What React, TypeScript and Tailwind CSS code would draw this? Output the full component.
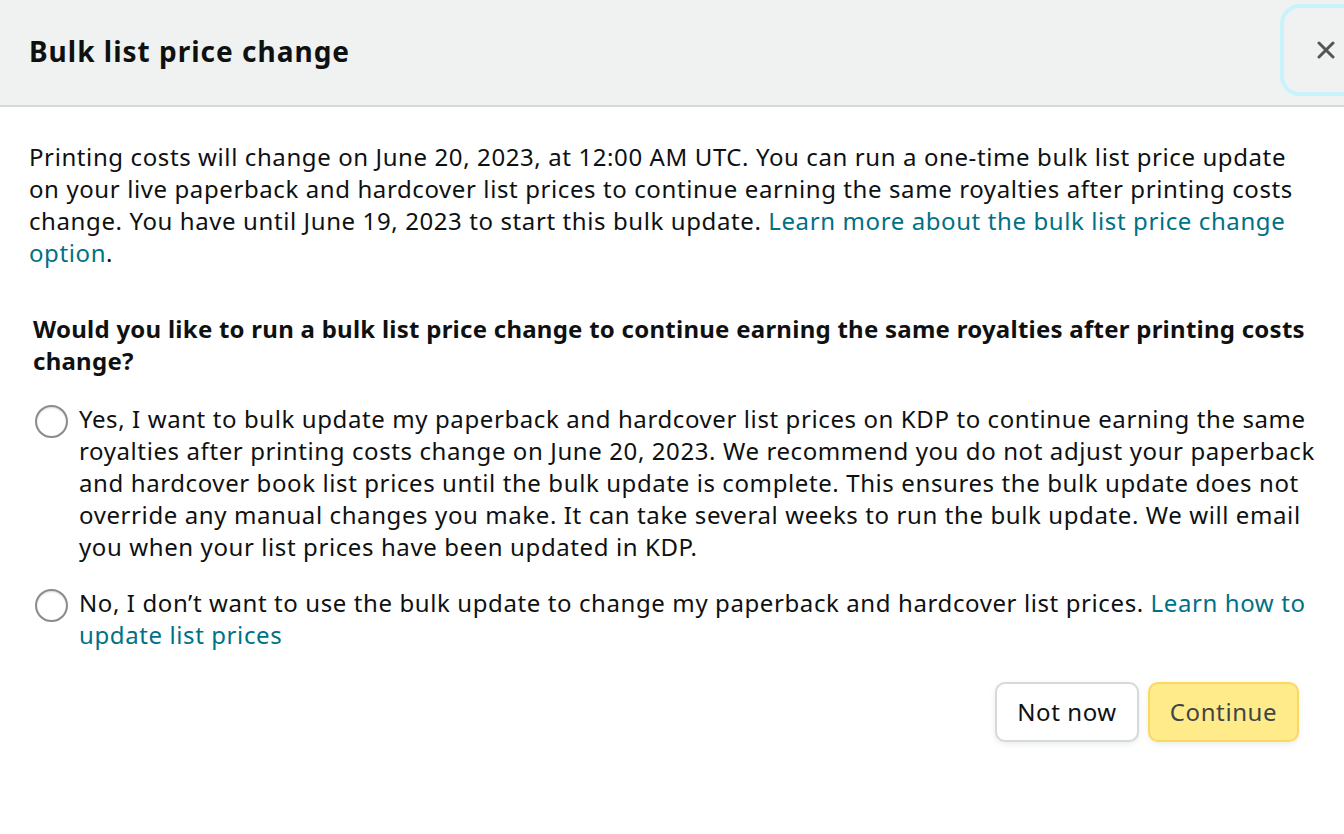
import { useState } from "react";

export default function App() {
  const [choice, setChoice] = useState<string | null>(null);

  return (
    <div className="min-h-[834px] w-[1344px] bg-white text-[#0f1111] font-['Noto_Sans',sans-serif] overflow-hidden">
      {/* header */}
      <div className="flex h-[107px] items-center justify-between border-b-2 border-[#d5d9d9] bg-[#f0f2f2] pl-[29px]">
        <h1 className="mb-[4px] text-[28px] font-bold tracking-[1px]">Bulk list price change</h1>
        <button className="mb-[6px] mr-[-40px] flex h-[92px] w-[104px] items-center rounded-[20px] border-[4px] border-[#c8f3fa] pl-[33px] text-[#555]">
          <svg width="18" height="18" viewBox="0 0 18 18">
            <path d="M2 2 L16 16 M16 2 L2 16" stroke="currentColor" strokeWidth="3" strokeLinecap="round" />
          </svg>
        </button>
      </div>

      <div className="pl-[29px] pr-[10px] pt-[34px] text-[24px] leading-[32px] tracking-[0.6px]">
        <p className="max-w-[1280px]">
          Printing costs will change on June 20, 2023, at 12:00 AM UTC. You can run a one-time bulk list price update on
          your live paperback and hardcover list prices to continue earning the same royalties after printing costs change.
          You have until June 19, 2023 to start this bulk update.{" "}
          <a className="text-[#007185]">Learn more about the bulk list price change option</a>.
        </p>

        <div className="mt-[44px] pl-[4px]">
          <p className="max-w-[1285px] font-bold tracking-[0.25px]">
            Would you like to run a bulk list price change to continue earning the same royalties after printing costs
            change?
          </p>

          <div className="mt-[26px] flex flex-col gap-[24px]">
            <label className="flex cursor-pointer items-start gap-[11px] pl-[2px]" onClick={() => setChoice("yes")}>
              <span className="mt-[2px] h-[33px] w-[33px] shrink-0 rounded-full border-2 border-[#888c8c] bg-white shadow-[inset_0_1px_2px_rgba(15,17,17,0.15)]">
                {choice === "yes" && <span className="m-[8px] block h-[13px] w-[13px] rounded-full bg-[#0f1111]" />}
              </span>
              <span className="max-w-[1255px]">
                Yes, I want to bulk update my paperback and hardcover list prices on KDP to continue earning the same
                royalties after printing costs change on June 20, 2023. We recommend you do not adjust your paperback and
                hardcover book list prices until the bulk update is complete. This ensures the bulk update does not
                override any manual changes you make. It can take several weeks to run the bulk update. We will email you
                when your list prices have been updated in KDP.
              </span>
            </label>

            <label className="flex cursor-pointer items-start gap-[11px] pl-[2px]" onClick={() => setChoice("no")}>
              <span className="mt-[2px] h-[33px] w-[33px] shrink-0 rounded-full border-2 border-[#888c8c] bg-white shadow-[inset_0_1px_2px_rgba(15,17,17,0.15)]">
                {choice === "no" && <span className="m-[8px] block h-[13px] w-[13px] rounded-full bg-[#0f1111]" />}
              </span>
              <span className="max-w-[1235px]">
                No, I don’t want to use the bulk update to change my paperback and hardcover list prices.{" "}
                <a className="text-[#007185]">Learn how to update list prices</a>
              </span>
            </label>
          </div>
        </div>

        <div className="mt-[31px] flex justify-end gap-[9px] pr-[35px]">
          <button className="h-[60px] w-[144px] rounded-[10px] border-2 border-[#d5d9d9] bg-white shadow-[0_2px_5px_rgba(213,217,217,0.5)]">
            Not now
          </button>
          <button className="h-[60px] w-[151px] rounded-[10px] border-2 border-[#fcd95e] bg-[#ffeb8a] text-[#3f4545] shadow-[0_2px_5px_rgba(213,217,217,0.5)]">
            Continue
          </button>
        </div>
      </div>
    </div>
  );
}
